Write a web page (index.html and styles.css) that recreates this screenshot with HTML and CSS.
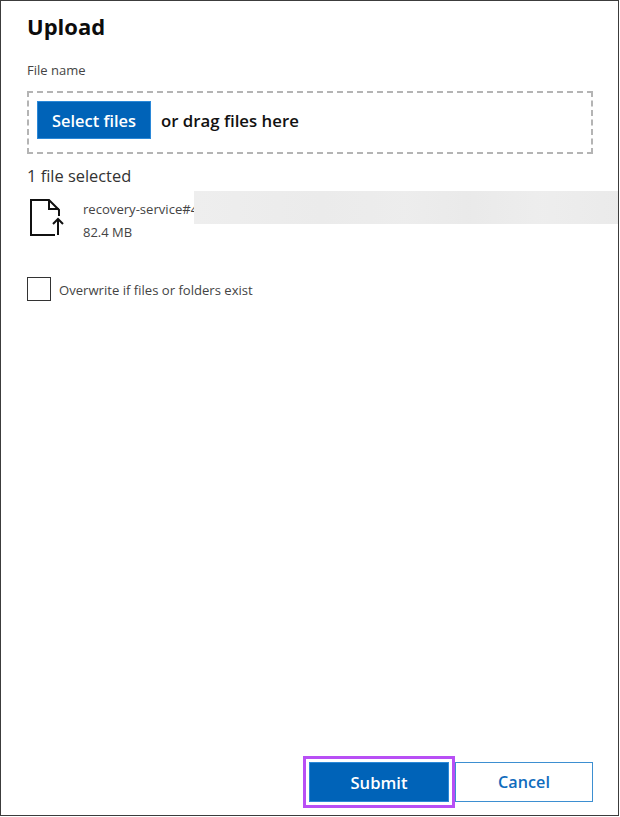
FILE: index.html
```html
<!DOCTYPE html>
<html lang="en">
<head>
<meta charset="utf-8">
<title>Upload</title>
<link rel="stylesheet" href="styles.css">
</head>
<body>
<main class="panel">
  <h1 class="title">Upload</h1>
  <label class="field-label">File name</label>
  <div class="dropzone">
    <button class="btn btn-primary btn-select" type="button">Select files</button>
    <span class="drop-hint">or drag files here</span>
  </div>
  <div class="count">1 file selected</div>
  <div class="file-row">
    <svg class="file-icon" width="35" height="38" viewBox="0 0 35 38" fill="none" stroke="#111" stroke-width="2">
      <path d="M26 37H2V2H20L30 12V18"/>
      <path d="M20 2V11H30"/>
      <path d="M29 37V21M24 26L29 21L34 26"/>
    </svg>
    <div class="file-meta">
      <div class="file-name">recovery-service#4</div>
      <div class="file-size">82.4 MB</div>
    </div>
    <div class="redaction"></div>
  </div>
  <label class="check-row">
    <span class="checkbox"></span>
    <span class="check-text">Overwrite if files or folders exist</span>
  </label>
  <div class="actions">
    <span class="focus-ring"><button class="btn btn-primary btn-submit" type="button">Submit</button></span>
    <button class="btn btn-outline" type="button">Cancel</button>
  </div>
</main>
</body>
</html>
```
FILE: styles.css
```css
html, body {
  margin: 0;
  height: 100%;
  background: #fff;
}
body {
  font-family: "Open Sans", "Noto Sans", sans-serif;
  color: #111;
  overflow: hidden;
}
.panel {
  box-sizing: border-box;
  width: 619px;
  height: 816px;
  border: 1px solid #3c3c3c;
  padding: 11px 25px 7px 26px;
  display: flex;
  flex-direction: column;
  position: relative;
}
.title {
  margin: 0;
  font-size: 22px;
  line-height: 28px;
  font-weight: 700;
  color: #0c0c0c;
}
.field-label {
  margin-top: 22px;
  font-size: 13px;
  line-height: 17px;
  color: #444;
}
.dropzone {
  margin-top: 12px;
  height: 63px;
  box-sizing: border-box;
  border: 2px dashed #b4b4b4;
  padding: 8px;
  display: flex;
  align-items: center;
  align-self: stretch;
  gap: 10px;
}
.btn {
  font-family: inherit;
  font-weight: 600;
  padding: 0;
  box-sizing: border-box;
  border-radius: 0;
}
.btn-primary {
  background: #0063b8;
  color: #fff;
  border: 1px solid #2b88d8;
}
.btn-select {
  width: 114px;
  height: 38px;
  margin-bottom: 5px;
  font-size: 16.400px;
}
.drop-hint {
  margin-bottom: 5px;
  font-size: 16.800px;
  font-weight: 600;
  color: #111;
}
.count {
  margin-top: 11px;
  font-size: 16.400px;
  line-height: 22px;
  color: #333;
}
.file-row {
  margin-top: 11px;
  display: flex;
  gap: 19px;
}
.file-icon {
  flex: none;
  margin-left: 2px;
}
.file-meta {
  margin-top: 2px;
}
.file-name, .file-size {
  font-size: 13.100px;
  line-height: 19px;
  color: #444;
}
.file-size {
  margin-top: 4px;
  font-size: 13px;
}
.redaction {
  position: absolute;
  left: 193px;
  top: 190px;
  width: 424px;
  height: 33px;
  background:
    linear-gradient(90deg, rgba(232,232,232,0), rgba(232,232,232,.5) 30%, rgba(232,232,232,.2) 50%, rgba(232,232,232,.7) 65%, rgba(232,232,232,.1) 82%, rgba(232,232,232,.6)),
    #eeeeee;
}
.check-row {
  margin-top: 35px;
  display: flex;
  align-items: center;
  gap: 8px;
}
.checkbox {
  width: 24px;
  height: 24px;
  box-sizing: border-box;
  border: 1px solid #333;
}
.check-text {
  padding-top: 2px;
  font-size: 13.100px;
  color: #444;
}
.actions {
  margin-top: auto;
  display: flex;
  justify-content: flex-end;
  align-items: center;
}
.focus-ring {
  display: flex;
  border: 3px solid #b84ff5;
  padding: 3px;
  background: #fff;
}
.btn-submit {
  width: 140px;
  height: 40px;
  font-size: 16.600px;
}
.btn-outline {
  width: 138px;
  height: 40px;
  background: #fff;
  color: #0f6cbd;
  border: 1px solid #3d8fd1;
  font-size: 16.200px;
}
```
